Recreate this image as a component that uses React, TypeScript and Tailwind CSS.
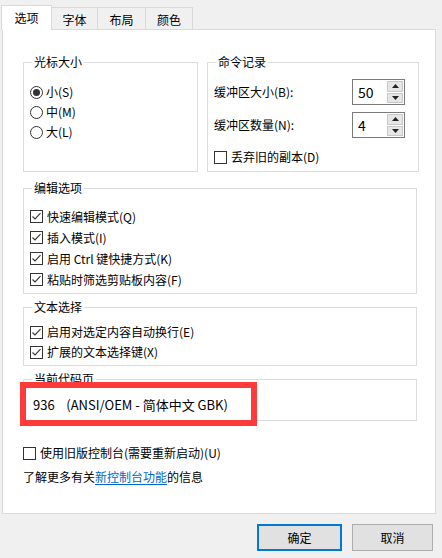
import React from 'react'

const font = { fontFamily: '"Noto Sans CJK SC", "Noto Sans", sans-serif' }

function Check({ checked }: { checked?: boolean }) {
  return (
    <span className="w-[13px] h-[13px] border border-[#333333] bg-white flex items-center justify-center shrink-0">
      {checked && (
        <svg width="11" height="11" viewBox="0 0 11 11">
          <path d="M1.5 5.5 L4 8 L9.5 2.2" fill="none" stroke="#333333" strokeWidth="1.1" />
        </svg>
      )}
    </span>
  )
}

function Radio({ checked }: { checked?: boolean }) {
  return (
    <span className="w-[13px] h-[13px] rounded-full border border-[#333333] bg-white flex items-center justify-center shrink-0">
      {checked && <span className="w-[7px] h-[7px] rounded-full bg-[#333333]" />}
    </span>
  )
}

function Group({ title, className, children }: { title: string; className?: string; children?: React.ReactNode }) {
  return (
    <fieldset className={`border border-[#dcdcdc] ${className ?? ''}`}>
      <legend className="ml-[8px] px-[2px] leading-[16px]">{title}</legend>
      {children}
    </fieldset>
  )
}

function Spin({ value }: { value: string }) {
  return (
    <div className="w-[53px] h-[26px] border border-[#7a7a7a] bg-white flex items-center">
      <span className="flex-1 pl-[5px] text-[14px] leading-[16px]">{value}</span>
      <div className="w-[16px] h-[22px] mr-[1px] flex flex-col gap-[1px]">
        <div className="flex-1 bg-[#e6e6e6] border border-[#c8c8c8] flex items-center justify-center">
          <svg width="7" height="4" viewBox="0 0 7 4"><path d="M0 4 L3.5 0 L7 4 Z" fill="#222" /></svg>
        </div>
        <div className="flex-1 bg-[#e6e6e6] border border-[#c8c8c8] flex items-center justify-center">
          <svg width="7" height="4" viewBox="0 0 7 4"><path d="M0 0 L3.5 4 L7 0 Z" fill="#222" /></svg>
        </div>
      </div>
    </div>
  )
}

function CheckRow({ label, checked }: { label: string; checked?: boolean }) {
  return (
    <div className="h-[21px] flex items-center gap-[4px]">
      <Check checked={checked} />
      <span>{label}</span>
    </div>
  )
}

export default function App() {
  return (
    <div className="w-[442px] h-[558px] bg-[#f0f0f0] text-[12px] text-black overflow-hidden" style={font}>
      <div className="h-[29px] flex items-end pl-[1px]">
        <div className="relative z-10 w-[51px] h-[25px] mb-[-1px] bg-white border border-b-0 border-[#d9d9d9] flex items-center justify-center">
          选项
        </div>
        {['字体', '布局', '颜色'].map((t, i) => (
          <div
            key={t}
            className={`h-[22px] border border-b-0 border-l-0 border-[#d9d9d9] flex items-center justify-center pt-[2px] ${
              i === 0 ? 'w-[46px]' : i === 1 ? 'w-[48px]' : 'w-[47px]'
            }`}
          >
            {t}
          </div>
        ))}
      </div>

      <div className="relative ml-[2px] w-[434px] h-[485px] bg-white border border-[#d9d9d9] pl-[20px] pt-[24px]">
        <div className="flex gap-[9px]">
          <Group title="光标大小" className="w-[175px] h-[118px]">
            <div className="pt-[12px] pl-[6px]">
              {[
                ['小(S)', true],
                ['中(M)', false],
                ['大(L)', false],
              ].map(([l, c]) => (
                <div key={l as string} className="h-[20px] flex items-center gap-[3px]">
                  <Radio checked={c as boolean} />
                  <span>{l as string}</span>
                </div>
              ))}
            </div>
          </Group>
          <Group title="命令记录" className="w-[212px] h-[118px]">
            <div className="pt-[9px] pl-[6px] pr-[13px]">
              <div className="flex items-center justify-between">
                <span>缓冲区大小(B):</span>
                <Spin value="50" />
              </div>
              <div className="flex items-center justify-between mt-[7px]">
                <span>缓冲区数量(N):</span>
                <Spin value="4" />
              </div>
              <div className="mt-[9px] h-[20px] flex items-center gap-[4px]">
                <Check />
                <span>丢弃旧的副本(D)</span>
              </div>
            </div>
          </Group>
        </div>

        <Group title="编辑选项" className="mt-[8px] w-[394px] h-[114px]">
          <div className="pt-[10px] pl-[6px]">
            <CheckRow label="快速编辑模式(Q)" checked />
            <CheckRow label="插入模式(I)" checked />
            <CheckRow label="启用 Ctrl 键快捷方式(K)" checked />
            <CheckRow label="粘贴时筛选剪贴板内容(F)" checked />
          </div>
        </Group>

        <Group title="文本选择" className="mt-[5px] w-[394px] h-[67px]">
          <div className="pt-[7px] pl-[6px]">
            <div className="h-[20px] flex items-center gap-[4px]">
              <Check checked />
              <span>启用对选定内容自动换行(E)</span>
            </div>
            <div className="h-[20px] flex items-center gap-[4px]">
              <Check checked />
              <span>扩展的文本选择键(X)</span>
            </div>
          </div>
        </Group>

        {/* code page value is shown inside the red annotation box below */}
        <Group title="当前代码页" className="mt-[5px] w-[394px] h-[50px]" />

        <div className="mt-[22px] h-[20px] flex items-center gap-[4px]">
          <Check />
          <span>使用旧版控制台(需要重新启动)(U)</span>
        </div>
        <div className="mt-[4px] h-[20px] flex items-center">
          <span>了解更多有关</span>
          <span className="text-[#0066cc] underline underline-offset-2">新控制台功能</span>
          <span>的信息</span>
        </div>

        {/* red annotation box */}
        <div className="absolute left-[17px] top-[352px] w-[237px] h-[44px] border-[6px] border-[#fd3b3b] bg-white flex items-center pl-[7px] pt-[1px] whitespace-pre text-[13px]">
          936    (ANSI/OEM - 简体中文 GBK)
        </div>
      </div>

      <div className="flex justify-end gap-[10px] pr-[9px] pt-[10px]">
        <button className="w-[85px] h-[27px] bg-[#e1e1e1] border-2 border-[#0078d7] flex items-center justify-center">确定</button>
        <button className="w-[81px] h-[27px] bg-[#e1e1e1] border border-[#adadad] flex items-center justify-center">取消</button>
      </div>
    </div>
  )
}
